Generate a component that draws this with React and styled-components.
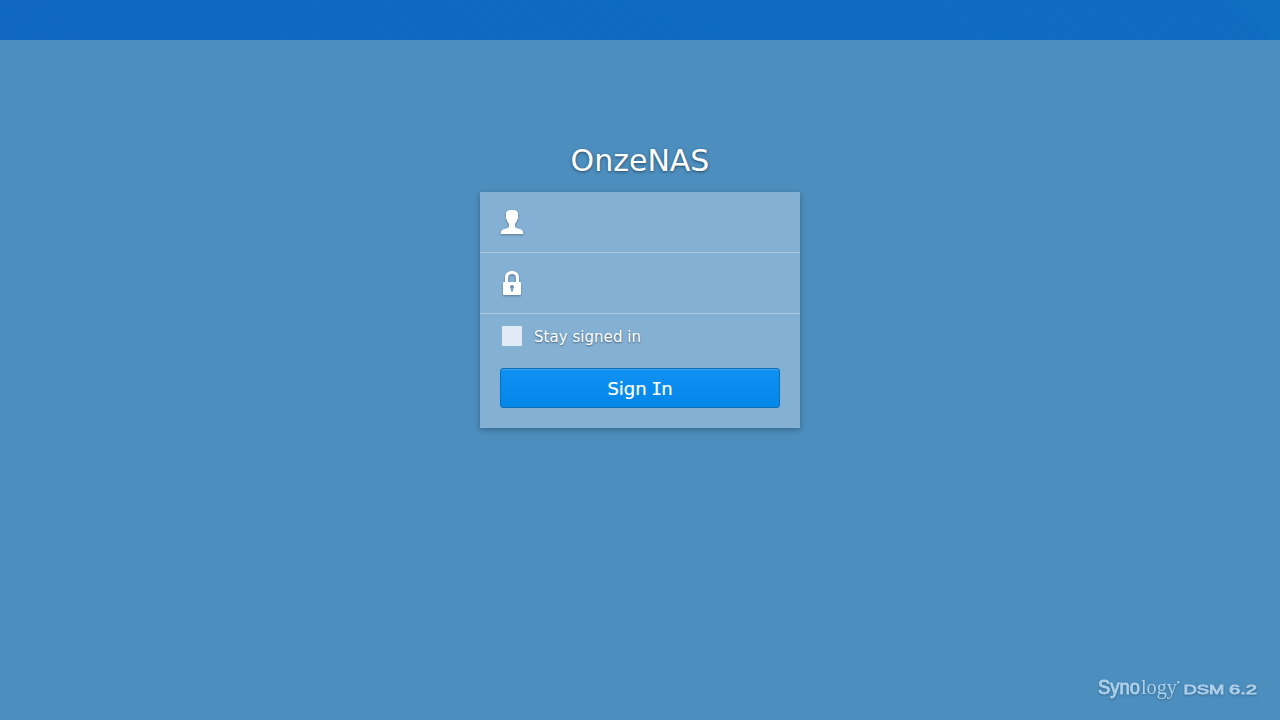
import React from 'react';
import styled, { createGlobalStyle } from 'styled-components';

const GlobalStyle = createGlobalStyle`
  * { box-sizing: border-box; }
  body { margin: 0; font-family: Verdana, "DejaVu Sans", sans-serif; overflow: hidden; }
`;

const Page = styled.div`
  height: 720px;
  display: flex;
  flex-direction: column;
  background: #4c8ebe;
`;

const TopBar = styled.div`
  flex: none;
  height: 40px;
  background:
    repeating-linear-gradient(45deg, rgba(0, 50, 150, 0.035) 0 1px, transparent 1px 3px),
    repeating-linear-gradient(-45deg, rgba(0, 50, 150, 0.035) 0 1px, transparent 1px 3px),
    linear-gradient(48deg, transparent 96.5%, rgba(18, 122, 196, 0.3) 97%),
    linear-gradient(90deg, #0f69c3, #0f6bc2 50%, #106dc0);
`;

const Main = styled.main`
  flex: 1;
  display: flex;
  flex-direction: column;
  align-items: center;
`;

const Title = styled.h1`
  margin: 101px 0 0;
  height: 51px;
  line-height: 40px;
  font-size: 30px;
  font-weight: 400;
  color: #fff;
  text-shadow: 0 1px 3px rgba(0, 0, 0, 0.5);
`;

const Card = styled.form`
  width: 320px;
  height: 236px;
  background: #84b0d3;
  box-shadow: 0 2px 6px rgba(0, 0, 0, 0.28);
`;

const Field = styled.label`
  display: flex;
  align-items: center;
  height: 61px;
  padding-left: 20px;
  border-bottom: 1px solid #a9c9e3;
`;

const FieldIcon = styled.svg`
  width: 24px;
  height: 28px;
  fill: #fff;
  filter: drop-shadow(0 1px 1px rgba(0, 0, 0, 0.3));
`;

const StayRow = styled.label`
  display: flex;
  align-items: center;
  gap: 12px;
  height: 44px;
  padding-left: 22px;
  font-size: 15px;
  color: #fff;
  text-shadow: 0 1px 2px rgba(0, 0, 0, 0.45);
`;

const StayText = styled.span`
  padding-top: 1px;
  letter-spacing: 0.04px;
`;

const CheckBox = styled.span`
  width: 20px;
  height: 20px;
  border-radius: 1px;
  background: #e1eaf5;
`;

const SignInButton = styled.button`
  display: block;
  width: 280px;
  height: 40px;
  margin: 10px 20px 0;
  padding: 1px 0 0;
  border: 1px solid #0d6fb8;
  border-radius: 3px;
  background: linear-gradient(#0f92f3, #0286e8);
  box-shadow: inset 0 1px #3aa4f3;
  font: 500 18px Verdana, "DejaVu Sans", sans-serif;
  -webkit-text-stroke: 0.2px #fff;
  color: #fff;
`;

const SerifCap = styled.span`
  font-family: "DejaVu Sans Mono", monospace;
  margin: 0 -1px 0 -1px;
`;

const Footer = styled.footer`
  display: flex;
  justify-content: flex-end;
  padding-right: 20px;
  height: 52px;
`;

const Logo = styled.svg`
  width: 165px;
  height: 32px;
  fill: #acd0ea;
  filter: drop-shadow(0 1px 1px rgba(0, 0, 0, 0.25));
`;

export default function App() {
  return (
    <>
      <GlobalStyle />
      <Page>
        <TopBar />
        <Main>
          <Title>OnzeNAS</Title>
          <Card>
            <Field>
              <FieldIcon viewBox="0 0 24 28">
                <path d="M12 2C16.3 2 18.2 3.3 18 6.5L17.9 8.4C18.6 9 18.1 11 17.3 11.5C17 13.7 15.3 14.8 15 16.3V18.4C15.2 19.8 16.8 20.1 19 20.8C22.3 21.8 23.2 22.9 23.2 26H.8C.8 22.9 1.7 21.8 5 20.8C7.2 20.1 8.8 19.8 9 18.4V16.3C8.7 14.8 7 13.7 6.7 11.5C5.9 11 5.4 9 6.1 8.4L6 6.5C5.8 3.3 7.7 2 12 2Z" />
              </FieldIcon>
            </Field>
            <Field>
              <FieldIcon viewBox="0 0 24 28">
                <path
                  fillRule="evenodd"
                  d="M5 13V8.5C5 4.3 7.8 2 12 2S19 4.3 19 8.5V13H20Q21 13 21 14V25Q21 26 20 26H4Q3 26 3 25V14Q3 13 4 13ZM8 13H16V9C16 6.3 14.5 5 12 5S8 6.3 8 9ZM12 16A2.1 2.1 0 0 0 11 19.9V22.5H13V19.9A2.1 2.1 0 0 0 12 16Z"
                />
              </FieldIcon>
            </Field>
            <StayRow>
              <CheckBox />
              <StayText>Stay signed in</StayText>
            </StayRow>
            <SignInButton type="button">
              Sign <SerifCap>I</SerifCap>n
            </SignInButton>
          </Card>
        </Main>
        <Footer>
          <Logo viewBox="0 0 165 32">
            <text x="3" y="26" fontFamily="Liberation Sans" fontSize="19.5" stroke="#acd0ea" strokeWidth="0.9" textLength="42" lengthAdjust="spacingAndGlyphs">Syno</text>
            <text x="46" y="26" fontFamily="Liberation Serif" fontSize="22" textLength="36" lengthAdjust="spacingAndGlyphs">logy</text>
            <circle cx="83.3" cy="14.3" r="1.3" />
            <text x="88.5" y="25.6" fontFamily="Liberation Sans" fontSize="13.6" stroke="#acd0ea" strokeWidth="0.8" textLength="41" lengthAdjust="spacingAndGlyphs">DSM</text>
            <text x="134" y="25.6" fontFamily="Liberation Sans" fontSize="13.6" stroke="#acd0ea" strokeWidth="0.8" textLength="28" lengthAdjust="spacingAndGlyphs">6.2</text>
          </Logo>
        </Footer>
      </Page>
    </>
  );
}
